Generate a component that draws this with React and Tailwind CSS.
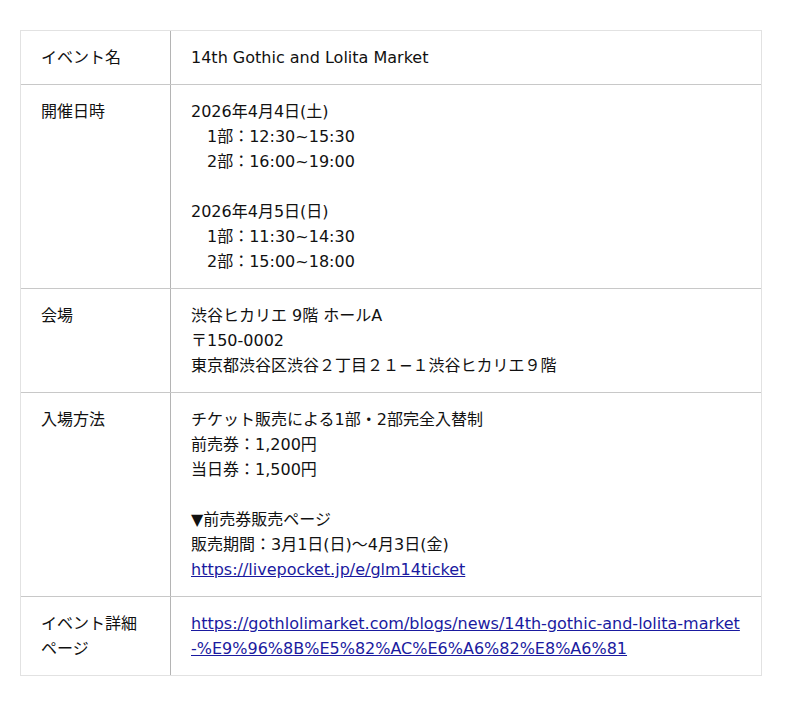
import React from 'react';

const rows = [
  { label: ['イベント名'], body: ['14th Gothic and Lolita Market'] },
  {
    label: ['開催日時'],
    body: [
      '2026年4月4日(土)',
      '　1部：12:30~15:30',
      '　2部：16:00~19:00',
      '',
      '2026年4月5日(日)',
      '　1部：11:30~14:30',
      '　2部：15:00~18:00',
    ],
  },
  {
    label: ['会場'],
    body: ['渋谷ヒカリエ 9階 ホールA', '〒150-0002', '東京都渋谷区渋谷２丁目２１−１渋谷ヒカリエ９階'],
  },
  {
    label: ['入場方法'],
    body: [
      'チケット販売による1部・2部完全入替制',
      '前売券：1,200円',
      '当日券：1,500円',
      '',
      '▼前売券販売ページ',
      '販売期間：3月1日(日)〜4月3日(金)',
      { link: 'https://livepocket.jp/e/glm14ticket' },
    ],
  },
  {
    label: ['イベント詳細', 'ページ'],
    body: [
      {
        link: 'https://gothlolimarket.com/blogs/news/14th-gothic-and-lolita-market-%E9%96%8B%E5%82%AC%E6%A6%82%E8%A6%81',
      },
    ],
  },
];

const Line = ({ item }) => {
  if (typeof item === 'object') {
    return (
      <a href={item.link} className="block break-all text-[#1a1aa0] underline">
        {item.link}
      </a>
    );
  }
  if (item === '') return <div className="h-[25px]" />;
  return <div className="whitespace-pre">{item}</div>;
};

export default function App() {
  return (
    <div
      className="min-h-screen bg-white pt-[30px] pl-[20px] text-[16px] leading-[25px] text-[#111]"
      style={{ fontFamily: '"DejaVu Sans", "Noto Sans CJK JP", sans-serif' }}
    >
      <div className="w-[742px] border border-[#e2e2e2]">
        {rows.map((row, i) => (
          <div key={i} className={`flex ${i > 0 ? 'border-t border-[#c8c8c8]' : ''}`}>
            <div className="w-[150px] shrink-0 border-r border-[#b4b4b4] px-[20px] py-[14px]">
              {row.label.map((l) => (
                <div key={l}>{l}</div>
              ))}
            </div>
            <div className="min-w-0 flex-1 px-[20px] py-[14px]">
              {row.body.map((item, j) => (
                <Line key={j} item={item} />
              ))}
            </div>
          </div>
        ))}
      </div>
    </div>
  );
}
